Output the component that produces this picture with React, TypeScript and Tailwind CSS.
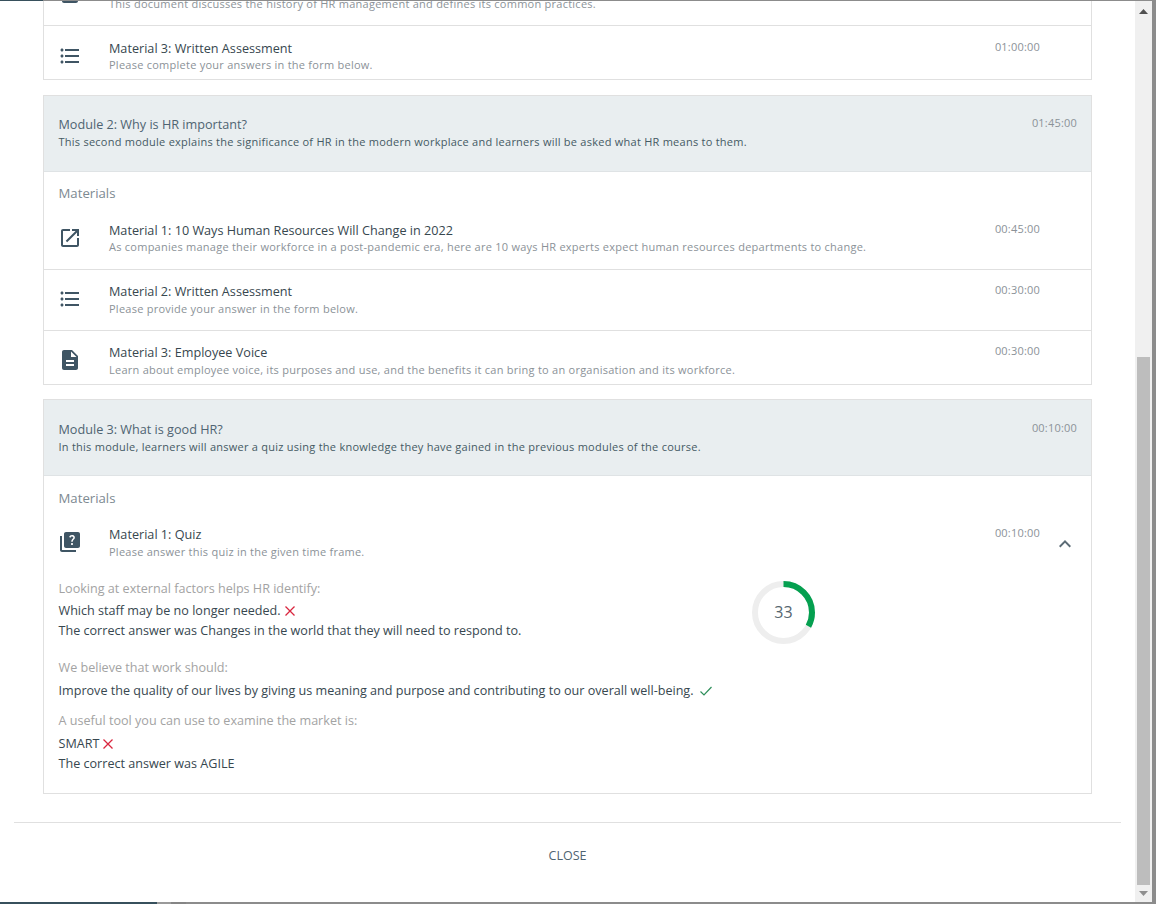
import React from "react";

const ICONS: Record<string, string> = {
  list: "M4 10.5c-.83 0-1.5.67-1.5 1.5s.67 1.5 1.5 1.5 1.5-.67 1.5-1.5-.67-1.5-1.5-1.5zm0-6c-.83 0-1.5.67-1.5 1.5S3.17 7.5 4 7.5 5.5 6.83 5.5 6 4.83 4.5 4 4.5zm0 12c-.83 0-1.5.68-1.5 1.5s.68 1.5 1.5 1.5 1.5-.68 1.5-1.5-.67-1.5-1.5-1.5zM7 19h14v-2H7v2zm0-6h14v-2H7v2zm0-8v2h14V5H7z",
  link: "M19 19H5V5h7V3H5c-1.11 0-2 .9-2 2v14c0 1.1.89 2 2 2h14c1.1 0 2-.9 2-2v-7h-2v7zM14 3v2h3.59l-9.83 9.83 1.41 1.41L19 6.41V10h2V3h-7z",
  doc: "M14 2H6c-1.1 0-1.99.9-1.99 2L4 20c0 1.1.89 2 1.99 2H18c1.1 0 2-.9 2-2V8l-6-6zm2 16H8v-2h8v2zm0-4H8v-2h8v2zm-3-5V3.5L18.5 9H13z",
  quiz: "M4 6H2v14c0 1.1.9 2 2 2h14v-2H4V6zm16-4H8c-1.1 0-2 .9-2 2v12c0 1.1.9 2 2 2h12c1.1 0 2-.9 2-2V4c0-1.1-.9-2-2-2zm-5.99 13c-.59 0-1.05-.47-1.05-1.05 0-.59.47-1.04 1.05-1.04.59 0 1.04.45 1.04 1.04-.01.58-.45 1.05-1.04 1.05zm2.5-6.17c-.63.93-1.23 1.21-1.56 1.81-.13.24-.18.4-.18 1.18h-1.52c0-.41-.06-1.08.26-1.65.41-.73 1.18-1.16 1.63-1.8.48-.68.21-1.94-1.14-1.94-.88 0-1.32.67-1.5 1.23l-1.37-.57C11.51 5.96 12.52 5 13.99 5c1.23 0 2.08.56 2.51 1.26.37.61.58 1.73.01 2.57z",
};

function Icon({ name }: { name: string }) {
  return (
    <svg width="24" height="24" viewBox="0 0 24 24" fill="#3f5564" className="shrink-0 mt-[5px]">
      <path d={ICONS[name]} />
    </svg>
  );
}

function Material({
  icon,
  title,
  sub,
  time,
  className,
  chevron,
}: {
  icon: string;
  title: string;
  sub: string;
  time: string;
  className: string;
  chevron?: boolean;
}) {
  return (
    <div className={`flex relative pl-[14px] pr-[51px] ${className}`}>
      <div className="w-[51px]">
        <Icon name={icon} />
      </div>
      <div className="flex-1 min-w-0">
        <p className="text-[12.65px] leading-[18px] text-[#37474f]">{title}</p>
        <p className="text-[11px] leading-[17px] tracking-[0.25px] text-[#8b9298]">{sub}</p>
      </div>
      <span className="-mt-px text-[11px] leading-[17px] tracking-[0.2px] text-[#8b9298]">{time}</span>
      {chevron && (
        <svg width="24" height="24" viewBox="0 0 24 24" fill="#5b6b75" className="absolute right-[14px] top-[17px]">
          <path d="M12 8l-6 6 1.41 1.41L12 10.83l4.59 4.58L18 14z" />
        </svg>
      )}
    </div>
  );
}

function ModuleHead({ title, desc, time, className }: { title: string; desc: string; time: string; className: string }) {
  return (
    <div className={`h-[76px] bg-[#e9eef0] border-b border-[#dfe3e5] flex justify-between pl-[14.5px] pr-[14px] ${className}`}>
      <div>
        <p className="text-[12.65px] leading-[18px] text-[#4f6472]">{title}</p>
        <p className="text-[11px] leading-[18px] tracking-[0.25px] text-[#455a64]">{desc}</p>
      </div>
      <span className="-mt-px text-[11px] leading-[17px] tracking-[0.2px] text-[#8b9298]">{time}</span>
    </div>
  );
}

function Cross() {
  return (
    <svg width="12" height="12" viewBox="0 0 12 12" fill="none" stroke="#d9263f" strokeWidth="1.3" className="inline-block ml-[3px] align-[-2px]">
      <path d="M1.5 1.5l9 9M10.5 1.5l-9 9" />
    </svg>
  );
}

function Question({ text, className }: { text: string; className: string }) {
  return <p className={`leading-[18px] text-[#a3a3a3] ${className}`}>{text}</p>;
}

function Score() {
  return (
    <div className="relative w-[63px] h-[63px] mt-[1px]">
      <svg width="63" height="63" viewBox="0 0 63 63" fill="none" className="-rotate-90">
        <circle cx="31.5" cy="31.5" r="28.5" stroke="#eeeeee" strokeWidth="6" />
        <circle cx="31.5" cy="31.5" r="28.5" stroke="#05a050" strokeWidth="6" strokeDasharray="59.1 179.1" />
      </svg>
      <span className="absolute inset-0 flex items-center justify-center text-[16px] text-[#56666f] pb-[2px]">33</span>
    </div>
  );
}

export default function App() {
  return (
    <div className="w-[1156px] h-[904px] overflow-hidden flex flex-col bg-[#8c8c8c] font-['Open_Sans',sans-serif]">
      <div className="h-px shrink-0 flex">
        <div className="w-[43px] bg-[#37505c]" />
      </div>
      <div className="flex-1 min-h-0 flex">
        <div className="w-[1152px] h-full bg-white flex">
          <div className="w-[1135px] flex flex-col">
            {/* scrolled body, top of it is cut off */}
            <div className="h-[821px] overflow-hidden pl-[43px] pr-[43px]">
              <div className="-mt-[35px]">
                <div className="border-x border-b border-[#e0e0e0]">
                  <Material
                    icon="doc"
                    title="Material 2: HR Management"
                    sub="This document discusses the history of HR management and defines its common practices."
                    time="00:15:00"
                    className="h-[60px] pt-[12px] border-b border-[#e0e0e0] [&_p+p]:-mt-px [&_svg]:mt-[3px]"
                  />
                  <Material
                    icon="list"
                    title="Material 3: Written Assessment"
                    sub="Please complete your answers in the form below."
                    time="01:00:00"
                    className="h-[53px] pt-[13px] [&_p+p]:-mt-px"
                  />
                </div>

                <div className="mt-[15px] border border-[#e0e0e0]">
                  <ModuleHead
                    title="Module 2: Why is HR important?"
                    desc="This second module explains the significance of HR in the modern workplace and learners will be asked what HR means to them."
                    time="01:45:00"
                    className="pt-[19px]"
                  />
                  <p className="pl-[14.5px] pt-[12px] h-[39px] text-[13.2px] leading-[18px] text-[#7d8a92]">Materials</p>
                  <Material
                    icon="link"
                    title="Material 1: 10 Ways Human Resources Will Change in 2022"
                    sub="As companies manage their workforce in a post-pandemic era, here are 10 ways HR experts expect human resources departments to change."
                    time="00:45:00"
                    className="h-[59px] pt-[10px] border-b border-[#e0e0e0] [&_p+p]:-mt-px"
                  />
                  <Material
                    icon="list"
                    title="Material 2: Written Assessment"
                    sub="Please provide your answer in the form below."
                    time="00:30:00"
                    className="h-[61px] pt-[12px] border-b border-[#e0e0e0]"
                  />
                  <Material
                    icon="doc"
                    title="Material 3: Employee Voice"
                    sub="Learn about employee voice, its purposes and use, and the benefits it can bring to an organisation and its workforce."
                    time="00:30:00"
                    className="h-[53px] pt-[12px]"
                  />
                </div>

                <div className="mt-[14px] border border-[#e0e0e0]">
                  <ModuleHead
                    title="Module 3: What is good HR?"
                    desc="In this module, learners will answer a quiz using the knowledge they have gained in the previous modules of the course."
                    time="00:10:00"
                    className="pt-[20px]"
                  />
                  <p className="pl-[14.5px] pt-[13px] h-[39px] text-[13.2px] leading-[18px] text-[#7d8a92]">Materials</p>
                  <Material
                    icon="quiz"
                    title="Material 1: Quiz"
                    sub="Please answer this quiz in the given time frame."
                    time="00:10:00"
                    className="h-[50px] pt-[10px]"
                    chevron
                  />
                  <div className="flex pl-[14.5px] pt-[15px] pb-[19px]">
                    <div className="w-[693.5px] text-[12.6px] leading-[20px] text-[#37474f]">
                      <Question text="Looking at external factors helps HR identify:" className="mb-[3px]" />
                      <p>
                        Which staff may be no longer needed.
                        <Cross />
                      </p>
                      <p>The correct answer was Changes in the world that they will need to respond to.</p>
                      <Question text="We believe that work should:" className="mt-[18px] mb-[4px]" />
                      <p>
                        Improve the quality of our lives by giving us meaning and purpose and contributing to our overall well-being.
                        <svg width="14" height="12" viewBox="0 0 14 12" fill="none" stroke="#2f8f5b" strokeWidth="1.2" className="inline-block ml-[5px] align-[-2px]">
                          <path d="M1.5 6.5l3.5 3.5 7.5-8" />
                        </svg>
                      </p>
                      <Question text="A useful tool you can use to examine the market is:" className="mt-[11px] mb-[4px]" />
                      <p>
                        SMART
                        <Cross />
                      </p>
                      <p>The correct answer was AGILE</p>
                    </div>
                    <Score />
                  </div>
                </div>
              </div>
            </div>
            <div className="mx-[14px] border-t border-[#e0e0e0] flex-1 flex items-center justify-center">
              <button className="text-[12.5px] text-[#4f6472] pb-[13px]">CLOSE</button>
            </div>
          </div>
          {/* scrollbar */}
          <div className="w-[17px] bg-[#f0f0f0] flex flex-col items-center">
            <svg width="9" height="5" viewBox="0 0 9 5" fill="#505050" className="mt-[8px] mb-[343px] shrink-0">
              <path d="M4.5 0L9 5H0z" />
            </svg>
            <div className="w-[13px] flex-1 bg-[#bdbdbd]" />
            <svg width="9" height="5" viewBox="0 0 9 5" fill="#8f8f8f" className="mt-[6px] mb-[6px] shrink-0">
              <path d="M4.5 5L9 0H0z" />
            </svg>
          </div>
        </div>
      </div>
      <div className="h-[2px] shrink-0 flex">
        <div className="w-[157px] bg-[#37505c]" />
        <div className="w-[14px] bg-[#9a9a9a]" />
        <div className="w-[15px] bg-[#858585]" />
      </div>
    </div>
  );
}
